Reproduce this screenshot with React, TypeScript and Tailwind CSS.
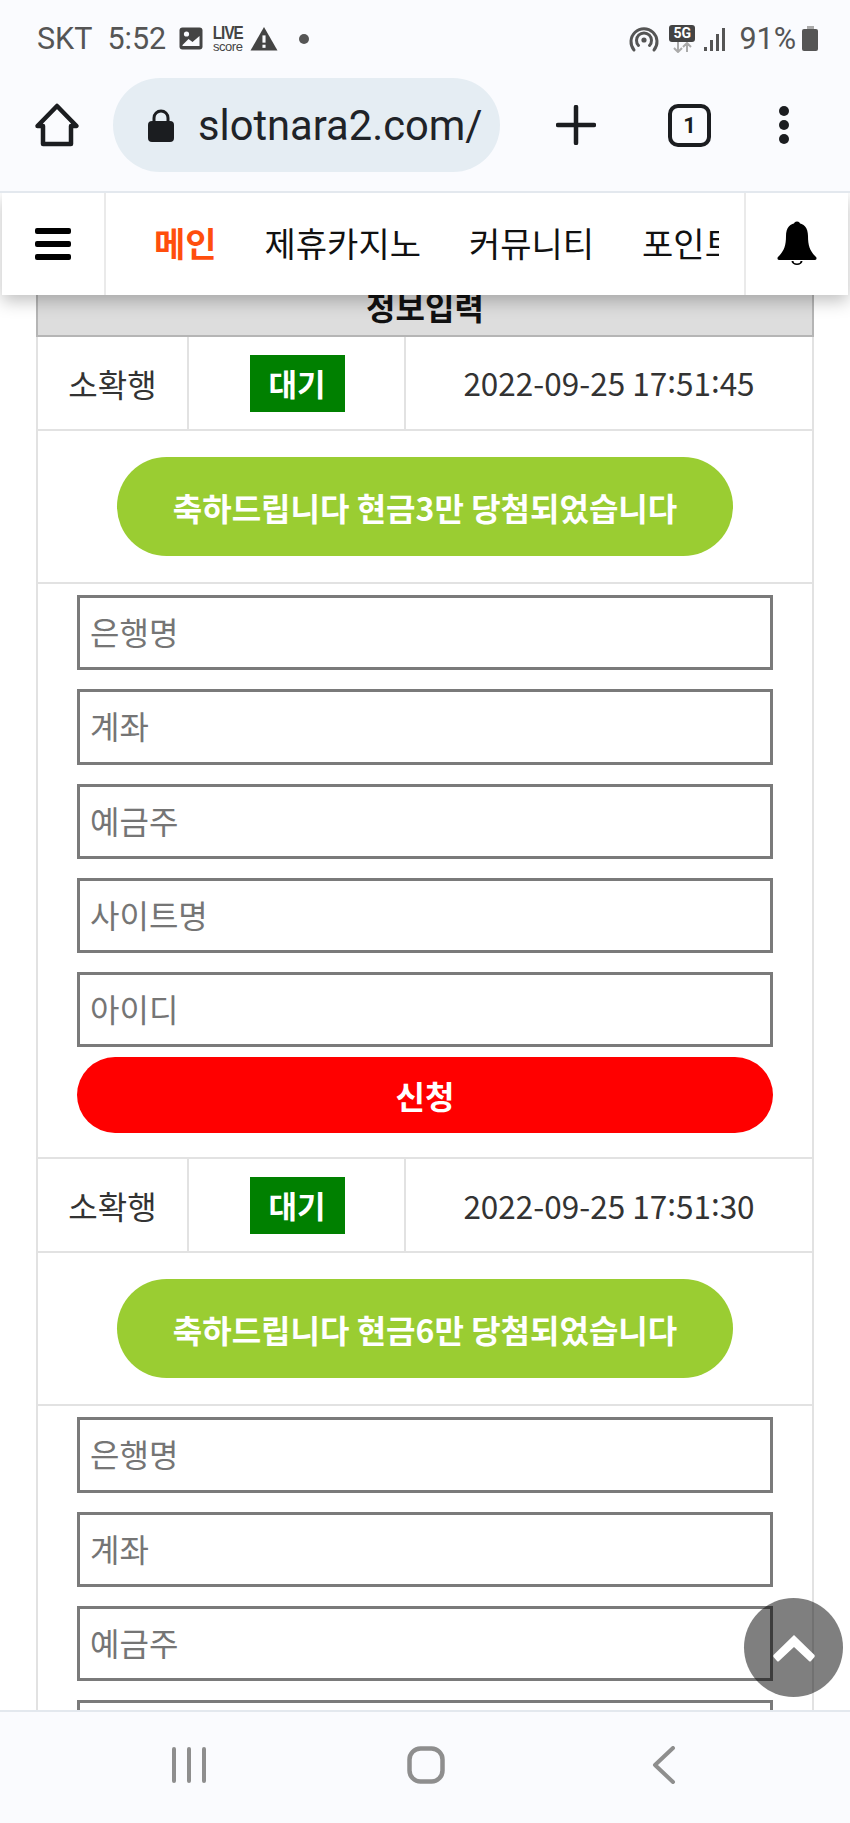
import React from "react";

const FONT = "[font-family:'Noto_Sans_CJK_KR','Noto_Sans',sans-serif]";

function Stamp({ value }: { value: string }) {
  const parts = value.split(":");
  return (
    <span>
      {parts.map((p, i) => (
        <React.Fragment key={i}>
          {i > 0 && <span className="inline-block -translate-y-[3px]">:</span>}
          {p}
        </React.Fragment>
      ))}
    </span>
  );
}

function Block({ badgeTime, prize, full }: { badgeTime: string; prize: string; full?: boolean }) {
  const fields = full ? ["은행명", "계좌", "예금주", "사이트명", "아이디"] : ["은행명", "계좌", "예금주", "사이트명"];
  return (
    <div>
      <div className="flex h-[94px] border-b-2 border-[#e2e2e2]">
        <div className="flex w-[151px] items-center justify-center border-r-2 border-[#e2e2e2] text-[32px] text-[#333]">소확행</div>
        <div className="flex w-[217px] items-center justify-center border-r-2 border-[#e2e2e2]">
          <span className="ml-[1px] flex h-[57px] w-[95px] items-center justify-center bg-[#008000] text-[31px] font-bold text-white">대기</span>
        </div>
        <div className="flex flex-1 items-center justify-center text-[31.5px] text-[#333]">
          <Stamp value={badgeTime} />
        </div>
      </div>
      <div className="flex h-[153px] items-center justify-center border-b-2 border-[#e2e2e2]">
        <div className="flex h-[99px] w-[616px] items-center justify-center rounded-[50px] bg-[#9acd32] text-[32px] font-bold text-white">
          축하드립니다 현금{prize}만 당첨되었습니다
        </div>
      </div>
      <div className="flex flex-col gap-[19px] px-[39px] pt-[11px]">
        {fields.map((f) => (
          <input
            key={f}
            readOnly
            placeholder={f}
            className={`${FONT} h-[75.25px] w-full border-[3px] border-[#7a7a7a] bg-white px-[10px] pb-[3px] text-[32px] placeholder:text-[#757575]`}
          />
        ))}
      </div>
      {full && (
        <div className="px-[39px] pb-[24px] pt-[10px]">
          <div className="flex h-[76px] items-center justify-center rounded-[38px] bg-[#ff0000] text-[32px] font-bold text-white">신청</div>
        </div>
      )}
    </div>
  );
}

export default function App() {
  return (
    <div className={`${FONT} relative flex h-[1823px] w-[850px] flex-col overflow-hidden bg-white`}>
      {/* phone status bar + browser toolbar */}
      <header className="z-20 h-[193px] shrink-0 border-b-2 border-[#e3e8ee] bg-[#fafbfe]">
        <div className="flex h-[78px] items-center justify-between pl-[37px] pr-[31px] pb-[1px] font-['Roboto',sans-serif] text-[30.5px] text-[#555]">
          <div className="flex items-center">
            <span>SKT</span>
            <span className="ml-[15px]">5:52</span>
            <svg className="ml-[13px]" width="24" height="23" viewBox="0 0 23 23">
              <rect width="23" height="22" y="0.5" rx="3" fill="#444" />
              <circle cx="7" cy="7" r="2.6" fill="#fafbfe" />
              <path d="M3 18 L9 12 L13 15 L20 9 V19 H3Z" fill="#fafbfe" />
            </svg>
            <div className="ml-[9px] flex w-[31px] flex-col items-center font-['Liberation_Sans',sans-serif] text-[#444]">
              <span className="h-[16px] text-[16px] font-bold leading-[16px] tracking-[-1px] [transform:scale(.95,1.2)]">LIVE</span>
              <span className="h-[11px] text-[13px] leading-[11px] tracking-[-.5px]">score</span>
            </div>
            <svg className="ml-[7px]" width="28" height="25" viewBox="0 0 27 24">
              <path d="M13.5 1 L26.5 23.5 H0.5Z" fill="#444" />
              <rect x="12" y="9" width="3" height="7" fill="#fafbfe" />
              <rect x="12" y="18" width="3" height="3" fill="#fafbfe" />
            </svg>
            <span className="ml-[21px] h-[10px] w-[10px] rounded-full bg-[#555]" />
          </div>
          <div className="flex items-center">
            <svg width="30" height="28" viewBox="0 0 30 28" fill="none" stroke="#555" strokeWidth="3" strokeLinecap="round">
              <path d="M5 25 A13 13 0 1 1 25 25" />
              <path d="M9.5 20.5 A7.5 7.5 0 1 1 20.5 20.5" />
              <circle cx="15" cy="15" r="2.6" fill="#555" stroke="none" />
            </svg>
            <div className="ml-[10px] flex w-[26px] flex-col items-center">
              <span className="flex h-[17px] w-[26px] items-center justify-center rounded-[3px] bg-[#444] font-['Roboto',sans-serif] text-[14px] font-bold leading-none text-white">5G</span>
              <svg width="24" height="11" viewBox="0 0 24 11" fill="none" stroke="#aaa" strokeWidth="2">
                <path d="M8 0V10M4 6l4 4 4-4M17 10V1M13 5l4-4 4 4" />
              </svg>
            </div>
            <svg className="ml-[8px]" width="24" height="24" viewBox="0 0 22 24" fill="#555">
              <rect x="0" y="20" width="3" height="4" />
              <rect x="6" y="13" width="3" height="11" />
              <rect x="12" y="7" width="3" height="17" />
              <rect x="18" y="1" width="3" height="23" />
            </svg>
            <span className="ml-[12px]">91%</span>
            <svg className="ml-[6px]" width="17" height="25" viewBox="0 0 17 25">
              <path d="M5 0h7v3h-7z" fill="#aaa" />
              <rect y="3" width="16" height="22" rx="2" fill="#555" />
            </svg>
          </div>
        </div>
        <div className="flex h-[94px] items-center">
          <svg className="ml-[34px]" width="46" height="46" viewBox="0 0 46 46" fill="none" stroke="#1b1d20" strokeWidth="4.5" strokeLinejoin="round" strokeLinecap="round">
            <path d="M3.5 24 L23 4 L42.5 24 H37 V42 H9 V24Z" />
          </svg>
          <div className="ml-[33px] flex h-[94px] w-[387px] items-center overflow-hidden rounded-[47px] bg-[#e5edf3] pl-[35px]">
            <svg className="shrink-0" width="26" height="33" viewBox="0 0 26 33">
              <path d="M6 14V9a7 7 0 0 1 14 0v5" fill="none" stroke="#1b1d20" strokeWidth="3" />
              <rect y="12" width="26" height="21" rx="4" fill="#1b1d20" />
            </svg>
            <span className="ml-[24px] mt-[2px] font-['Roboto',sans-serif] text-[41.7px] leading-none text-[#1f2328]">slotnara2.com/</span>
          </div>
          <svg className="ml-[56px]" width="40" height="40" viewBox="0 0 40 40" stroke="#1b1d20" strokeWidth="4.5" strokeLinecap="round">
            <path d="M20 2V38M2 20H38" />
          </svg>
          <div className="ml-[72px] flex h-[43px] w-[43px] items-center justify-center rounded-[10px] border-[4px] border-[#1b1d20] font-['Roboto',sans-serif] text-[22px] font-bold text-[#1b1d20]">1</div>
          <div className="ml-[68px] flex flex-col gap-[4px]">
            <span className="h-[10px] w-[10px] rounded-full bg-[#1b1d20]" />
            <span className="h-[10px] w-[10px] rounded-full bg-[#1b1d20]" />
            <span className="h-[10px] w-[10px] rounded-full bg-[#1b1d20]" />
          </div>
        </div>
      </header>

      {/* site nav */}
      <nav className="z-10 mx-[2px] flex h-[102px] w-[846px] shrink-0 bg-white shadow-[0_6px_16px_rgba(0,0,0,0.25)]">
        <div className="flex w-[104px] shrink-0 items-center justify-center border-r-2 border-[#eaeaea]">
          <svg width="36" height="32" viewBox="0 0 36 32" fill="#000">
            <rect width="36" height="6" rx="2" />
            <rect y="13" width="36" height="6" rx="2" />
            <rect y="26" width="36" height="6" rx="2" />
          </svg>
        </div>
        <div className="ml-[23px] mr-[25px] flex flex-1 items-center overflow-hidden whitespace-nowrap pb-[4px] text-[34px] text-[#111]">
          <span className="shrink-0 pl-[25px] pr-[24px] font-bold text-[#ff4e0d]">메인</span>
          <span className="shrink-0 px-[24px]">제휴카지노</span>
          <span className="shrink-0 px-[24px]">커뮤니티</span>
          <span className="shrink-0 px-[24px]">포인트</span>
        </div>
        <div className="flex w-[104px] shrink-0 items-center justify-center border-l-2 border-[#eaeaea]">
          <svg className="mb-[2px]" width="40" height="44" viewBox="0 0 40 44" fill="#000">
            <circle cx="20" cy="3.5" r="3" />
            <path d="M20 2c-7 0-11 5-11 13 0 10-2 15-8 21 -1 1-.5 3 1 3h36c1.500 0 2-2 1-3-6-6-8-11-8-21 0-8-4-13-11-13z" />
            <path d="M14.500 40a5.500 4 0 0 0 11 0h-2a3.500 2.500 0 0 1-7 0z" />
          </svg>
        </div>
      </nav>

      {/* page body */}
      <main className="min-h-0 flex-1 overflow-hidden px-[36px]">
        <div className="border-x-2 border-[#e2e2e2]">
          <div className="-mx-[2px] flex h-[42px] items-end justify-center border-x-2 border-b-2 border-x-[#b5b5b5] border-b-[#b5b5b5] bg-[#dddddd] pb-[9px] text-[32px] font-bold leading-[40px] text-[#111]">
            정보입력
          </div>
          <Block badgeTime="2022-09-25 17:51:45" prize="3" full />
          <div className="border-t-2 border-[#e2e2e2]">
            <Block badgeTime="2022-09-25 17:51:30" prize="6" />
          </div>
        </div>
      </main>

      {/* bottom phone nav */}
      <footer className="flex h-[113px] shrink-0 items-center border-t-2 border-[#e3e8ee] bg-[#fafbfe] pb-[6px] pl-[171px]">
        <svg width="36" height="36" viewBox="0 0 36 36" stroke="#8e8e8e" strokeWidth="4" strokeLinecap="round">
          <path d="M3 2V34M18 2V34M33 2V34" />
        </svg>
        <svg className="ml-[200px]" width="38" height="38" viewBox="0 0 38 38" fill="none" stroke="#8e8e8e" strokeWidth="4.500">
          <rect x="2.500" y="2.500" width="33" height="33" rx="11" />
        </svg>
        <svg className="ml-[207px]" width="24" height="38" viewBox="0 0 24 38" fill="none" stroke="#8e8e8e" strokeWidth="4" strokeLinecap="round" strokeLinejoin="round">
          <path d="M21 2 L3 19 L21 36" />
        </svg>
      </footer>

      {/* scroll to top */}
      <button className="absolute left-[744px] top-[1598px] z-30 flex h-[99px] w-[99px] items-center justify-center rounded-full bg-[rgba(0,0,0,0.5)]">
        <svg className="mt-[2px]" width="42" height="27" viewBox="0 0 42 27" fill="#fff">
          <path d="M21 0 L41.500 20 Q42 21 41.500 22 L38 26 Q37 27 36 26 L21 12 L6 26 Q5 27 4 26 L.5 22 Q0 21 .5 20Z" />
        </svg>
      </button>
    </div>
  );
}
